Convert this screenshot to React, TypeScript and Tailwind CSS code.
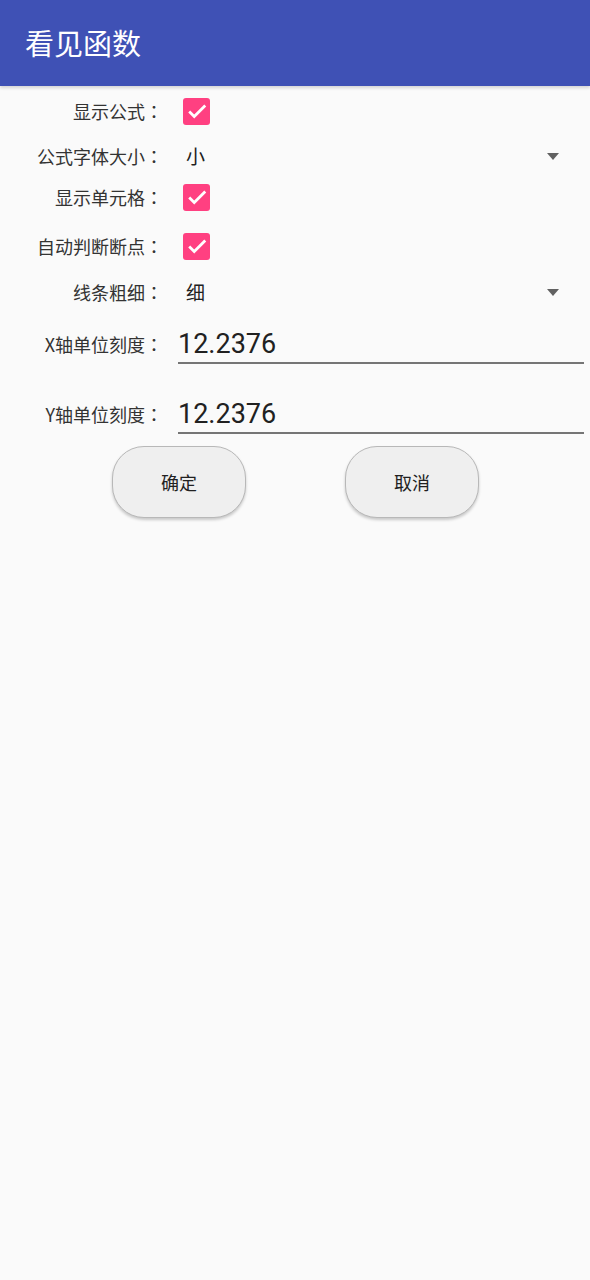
import React, { useState } from 'react';

const cjk = { fontFamily: "'Noto Sans CJK SC', Roboto, sans-serif" };
const latin = { fontFamily: "Roboto, 'Noto Sans CJK SC', sans-serif" };
const colon = { fontFamily: "'Noto Sans CJK TC', 'Noto Sans CJK SC', sans-serif" };

const Check: React.FC<{ checked: boolean; onToggle: () => void }> = ({ checked, onToggle }) => (
  <button
    type="button"
    onClick={onToggle}
    className={`flex h-[27px] w-[27px] items-center justify-center rounded-[3px] ${
      checked ? 'bg-[#ff4081]' : 'border-2 border-[#757575] bg-transparent'
    }`}
  >
    {checked && (
      <svg width="22" height="22" viewBox="0 0 24 24">
        <path d="M3.5 12.5l5.5 5.5L21 6" fill="none" stroke="#fff" strokeWidth="3" />
      </svg>
    )}
  </button>
);

const Label: React.FC<{ text: string }> = ({ text }) => (
  <div className="w-[163px] shrink-0 text-right text-[18px] text-[#333333]" style={cjk}>
    {text}
    <span style={colon}>：</span>
  </div>
);

const Spinner: React.FC<{ value: string }> = ({ value }) => (
  <div className="ml-[23px] flex flex-1 items-center pr-[31px]">
    <span className="flex-1 text-[19px] text-[#212121]" style={cjk}>
      {value}
    </span>
    <svg width="12" height="7" viewBox="0 0 12 7">
      <path d="M0 0h12L6 7z" fill="#616161" />
    </svg>
  </div>
);

const App: React.FC = () => {
  const [showFormula, setShowFormula] = useState(true);
  const [showCells, setShowCells] = useState(true);
  const [autoBreak, setAutoBreak] = useState(true);
  const [xScale, setXScale] = useState('12.2376');
  const [yScale, setYScale] = useState('12.2376');

  return (
    <div className="min-h-[1280px] w-[590px] bg-[#fafafa]" style={cjk}>
      <div className="flex h-[86px] items-center bg-[#3f51b5] pl-[25px] shadow-[0_2px_3px_rgba(0,0,0,0.15)]">
        <span className="text-[29px] text-white">看见函数</span>
      </div>

      <div className="flex h-[50px] items-center">
        <Label text="显示公式" />
        <div className="ml-[20px]">
          <Check checked={showFormula} onToggle={() => setShowFormula(!showFormula)} />
        </div>
      </div>

      <div className="flex h-[40px] items-center">
        <Label text="公式字体大小" />
        <Spinner value="小" />
      </div>

      <div className="flex h-[42px] items-center">
        <Label text="显示单元格" />
        <div className="ml-[20px]">
          <Check checked={showCells} onToggle={() => setShowCells(!showCells)} />
        </div>
      </div>

      <div className="flex h-[56px] items-center">
        <Label text="自动判断断点" />
        <div className="ml-[20px]">
          <Check checked={autoBreak} onToggle={() => setAutoBreak(!autoBreak)} />
        </div>
      </div>

      <div className="flex h-[36px] items-center">
        <Label text="线条粗细" />
        <Spinner value="细" />
      </div>

      <div className="mt-[16px] flex items-start">
        <div className="leading-[36px]">
          <Label text="X轴单位刻度" />
        </div>
        <input
          value={xScale}
          onChange={(e) => setXScale(e.target.value)}
          style={latin}
          className="ml-[15px] mr-[6px] h-[38px] min-w-0 flex-1 border-b-2 border-[#757575] bg-transparent text-[27px] leading-[36px] text-[#212121] outline-none"
        />
      </div>

      <div className="mt-[32px] flex items-start">
        <div className="leading-[36px]">
          <Label text="Y轴单位刻度" />
        </div>
        <input
          value={yScale}
          onChange={(e) => setYScale(e.target.value)}
          style={latin}
          className="ml-[15px] mr-[6px] h-[38px] min-w-0 flex-1 border-b-2 border-[#757575] bg-transparent text-[27px] leading-[36px] text-[#212121] outline-none"
        />
      </div>

      <div className="mt-[12px] flex pl-[112px]">
        <button
          type="button"
          className="h-[72px] w-[134px] rounded-[32px] border border-[#b8b8b8] bg-[#efefef] text-[18px] text-[#212121] shadow-[0_2px_3px_rgba(0,0,0,0.2)]"
        >
          确定
        </button>
        <button
          type="button"
          className="ml-[99px] h-[72px] w-[134px] rounded-[32px] border border-[#b8b8b8] bg-[#efefef] text-[18px] text-[#212121] shadow-[0_2px_3px_rgba(0,0,0,0.2)]"
        >
          取消
        </button>
      </div>
    </div>
  );
};

export default App;
